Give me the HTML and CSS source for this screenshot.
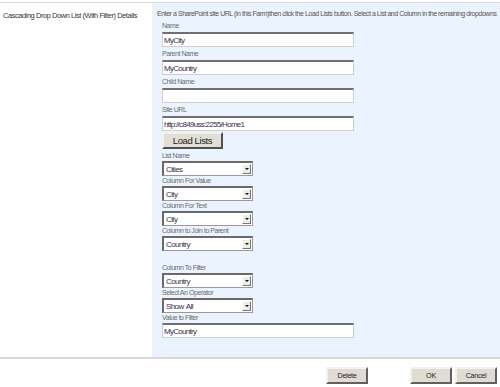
FILE: index.html
```html
<!DOCTYPE html>
<html lang="en">
<head>
  <meta charset="UTF-8">
  <title>Cascading Drop Down List (With Filter) Details</title>
  <link rel="stylesheet" href="styles.css">
</head>
<body>
  <div class="section">
    <div class="section-title">Cascading Drop Down List (With Filter) Details</div>
    <div class="section-body">
      <div class="intro">Enter a SharePoint site URL (in this Farm)then click the Load Lists button. Select a List and Column in the remaining dropdowns</div>

      <div class="field">
        <div class="field-label">Name</div>
        <input class="text-box" type="text" value="MyCity">
      </div>
      <div class="field">
        <div class="field-label">Parent Name</div>
        <input class="text-box" type="text" value="MyCountry">
      </div>
      <div class="field">
        <div class="field-label">Child Name</div>
        <input class="text-box" type="text" value="">
      </div>
      <div class="field">
        <div class="field-label">Site URL</div>
        <input class="text-box" type="text" value="http://c849uss:2255/Home1">
      </div>
      <button class="load-btn">Load Lists</button>

      <div class="field small">
        <div class="field-label">List Name</div>
        <span class="drop"><select><option>Cities</option></select></span>
      </div>
      <div class="field small">
        <div class="field-label">Column For Value</div>
        <span class="drop"><select><option>City</option></select></span>
      </div>
      <div class="field small">
        <div class="field-label">Column For Text</div>
        <span class="drop"><select><option>City</option></select></span>
      </div>
      <div class="field small">
        <div class="field-label">Column to Join to Parent</div>
        <span class="drop"><select><option>Country</option></select></span>
      </div>

      <div class="field small spaced">
        <div class="field-label">Column To Filter</div>
        <span class="drop"><select><option>Country</option></select></span>
      </div>
      <div class="field small">
        <div class="field-label">Select An Operator</div>
        <span class="drop"><select><option>Show All</option></select></span>
      </div>
      <div class="field small">
        <div class="field-label">Value to Filter</div>
        <input class="text-box" type="text" value="MyCountry">
      </div>
    </div>
  </div>

  <div class="footer">
    <button class="btn">Delete</button>
    <span class="btn-gap"></span>
    <button class="btn">OK</button>
    <button class="btn">Cancel</button>
  </div>
</body>
</html>
```

FILE: styles.css
```css
body {
  margin: 0;
  font-family: "Liberation Sans", Arial, sans-serif;
  font-size: 7px;
  color: #4c4c4c;
  background: #fff;
}

.section {
  display: flex;
  margin-top: 2px;
  border-top: 1px solid #dcdcdc;
  min-height: 354px;
}

.section-title {
  flex: none;
  width: 149px;
  padding: 8px 0 0 3px;
  color: #333;
  font-size: 7.4px;
  letter-spacing: -0.4px;
  white-space: nowrap;
}

.section-body {
  flex: 1;
  background: #ebf3fe;
  padding: 6px 0 0 5px;
}

.intro {
  height: 9px;
  line-height: 9px;
  color: #555;
  letter-spacing: -0.45px;
  white-space: nowrap;
  margin-bottom: 1px;
}

.field {
  padding-left: 5px;
}

.field-label {
  color: #6c6c6c;
  font-size: 7px;
  letter-spacing: -0.45px;
  height: 9px;
  line-height: 9px;
  padding: 2px 0 2px;
}

.small .field-label {
  padding: 0 0 1px;
}

.spaced {
  margin-top: 12px;
}

.text-box {
  display: block;
  box-sizing: border-box;
  width: 192px;
  height: 15px;
  margin: 0;
  padding: 0 1px;
  border: 1px solid #cfcfcf;
  border-top: 2px solid #6f6f6f;
  background: #fff;
  font-family: "Liberation Sans", Arial, sans-serif;
  font-size: 8px;
  color: #3a2e4a;
  letter-spacing: -0.7px;
}

.load-btn {
  display: block;
  box-sizing: border-box;
  margin: 1px 0 2px 5px;
  width: 61px;
  height: 17px;
  padding: 0;
  background: #e2ded6;
  border: 2px solid;
  border-color: #f4f2ee #505050 #505050 #f4f2ee;
  font-family: "Liberation Sans", Arial, sans-serif;
  font-size: 9.5px;
  letter-spacing: -0.4px;
  color: #222;
}

.drop {
  position: relative;
  display: block;
  width: 91px;
  height: 15px;
}

.drop select {
  -webkit-appearance: none;
  appearance: none;
  box-sizing: border-box;
  width: 91px;
  height: 15px;
  margin: 0;
  padding: 0 0 0 2px;
  border: 1px solid #9a9a9a;
  border-top: 2px solid #6a6a6a;
  border-left: 2px solid #6a6a6a;
  border-radius: 0;
  background: #fff;
  font-family: "Liberation Sans", Arial, sans-serif;
  font-size: 8px;
  color: #3a2e4a;
  letter-spacing: -0.6px;
  word-spacing: 1px;
}

.drop::after {
  content: "";
  position: absolute;
  right: 2px;
  top: 3px;
  width: 7px;
  height: 8px;
  background: #ecebe6;
  border: 1px solid;
  border-color: #fff #777 #777 #fff;
}

.drop::before {
  content: "";
  position: absolute;
  right: 4px;
  top: 7px;
  z-index: 1;
  border-left: 2px solid transparent;
  border-right: 2px solid transparent;
  border-top: 2px solid #111;
}

.footer {
  display: flex;
  justify-content: flex-end;
  align-items: center;
  border-top: 2px solid #d8d8d8;
  padding: 8px 3px 0 0;
  gap: 3px;
}

.btn {
  box-sizing: border-box;
  width: 42px;
  height: 17px;
  padding: 0;
  background: #e0dcd4;
  border: 2px solid;
  border-color: #f4f2ee #606060 #606060 #f4f2ee;
  font-family: "Liberation Sans", Arial, sans-serif;
  font-size: 7.2px;
  letter-spacing: -0.3px;
  color: #222;
}

.btn-gap {
  width: 36px;
}
```
